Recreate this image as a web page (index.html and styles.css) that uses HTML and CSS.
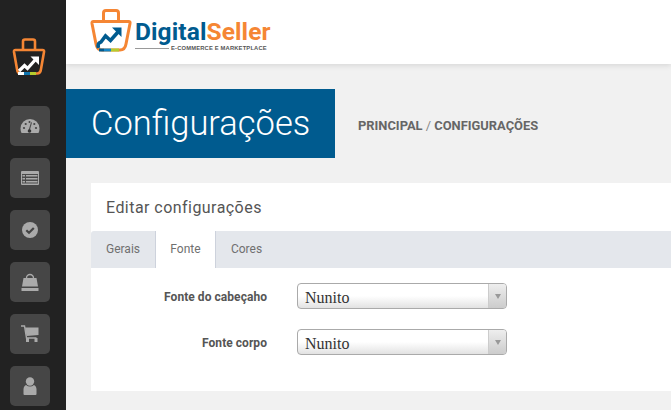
FILE: index.html
```html
<!DOCTYPE html>
<html lang="pt-BR">
<head>
<meta charset="utf-8">
<title>Configurações</title>
<link rel="stylesheet" href="styles.css">
</head>
<body>
<aside class="sidebar">
  <div class="side-logo">
    <svg width="34" height="38" viewBox="0 0 34 38" fill="none">
      <path d="M11 12V3.500Q11 1.500 13 1.500H21Q23 1.500 23 3.500V12" stroke="#f58634" stroke-width="2.600"/>
      <path d="M3.500 12H30.500Q32.500 12 32 14L29 31Q28.500 35.500 25 35.500H9Q5.500 35.500 5 31L2 14Q1.700 12 3.500 12Z" stroke="#f58634" stroke-width="2.600"/>
      <path d="M7 33L12.500 27.500L15.500 30.500L24 21" stroke="#fff" stroke-width="3.200"/>
      <path d="M18.500 18.500H27V27Z" fill="#fff"/>
      <path d="M6 35.500H12" stroke="#fff" stroke-width="3"/>
      <path d="M12 35.500H18" stroke="#0f74ad" stroke-width="3"/>
      <path d="M18 35.500H24" stroke="#b5cc2e" stroke-width="3"/>
    </svg>
  </div>
  <nav class="side-nav">
    <a class="side-btn"><svg width="20" height="16" viewBox="0 0 20 16"><path fill="#aaa" d="M10 1A9.500 9.500 0 0 0 .5 10.500Q.5 13 1.500 15H18.500Q19.500 13 19.500 10.500A9.500 9.500 0 0 0 10 1Z"/><path fill="#4a4a4a" d="M9.600 13L12 4.500L11 4.300L8.500 12.600Z"/><circle cx="9.500" cy="13" r="1.800" fill="#333"/><circle cx="4" cy="10" r="1.100" fill="#444"/><circle cx="5.700" cy="6" r="1.100" fill="#444"/><circle cx="9.500" cy="4" r="1" fill="#444"/><circle cx="14.300" cy="6" r="1.100" fill="#444"/><circle cx="16" cy="10" r="1.100" fill="#444"/></svg></a>
    <a class="side-btn"><svg width="18" height="14" viewBox="0 0 18 14"><rect width="18" height="14" rx="1" fill="#aaa"/><path fill="#4a4a4a" d="M1 3h16v9.500H1z"/><path fill="#aaa" d="M1.500 4h2.500v1.500H1.500zM5 4h11.500v1.500H5zM1.500 7h2.500v1.500H1.500zM5 7h11.500v1.500H5zM1.500 10h2.500v1.500H1.500zM5 10h11.500v1.500H5z"/></svg></a>
    <a class="side-btn"><svg width="16" height="16" viewBox="0 0 16 16"><circle cx="8" cy="8" r="8" fill="#aaa"/><path d="M4.300 8.200L7 10.800L11.800 5.900" fill="none" stroke="#444" stroke-width="2.200"/></svg></a>
    <a class="side-btn"><svg width="18" height="18" viewBox="0 0 18 18"><path fill="none" stroke="#aaa" stroke-width="1.300" d="M5.500 7V5A3.500 3.500 0 0 1 12.500 5V7"/><path fill="#aaa" d="M2.500 5H15.500L17 13.500H1ZM.5 15H17.500V18H.5Z"/></svg></a>
    <a class="side-btn"><svg width="18" height="18" viewBox="0 0 18 18"><path fill="none" stroke="#aaa" stroke-width="1.400" d="M0 1H3.500L5.500 13H15.500"/><path fill="#aaa" d="M4 2.500H17.500V10L5.500 11Z"/><rect x="5" y="13" width="3" height="4" fill="#aaa"/><rect x="13.500" y="13" width="3" height="4" fill="#aaa"/></svg></a>
    <a class="side-btn"><svg width="14" height="18" viewBox="0 0 14 18"><circle cx="7" cy="4.500" r="4.200" fill="#aaa"/><path fill="#aaa" d="M3 8Q7 11 11 8Q13.500 9 13.500 12.500V17Q13.500 18 12.500 18H1.500Q.5 18 .5 17V12.500Q.5 9 3 8Z"/></svg></a>
  </nav>
</aside>
<div class="main">
  <header class="topbar">
    <div class="brand">
      <svg class="brand-mark" width="42" height="43" viewBox="0 0 42 43" fill="none">
        <path d="M13.500 12V4Q13.500 1.500 16 1.500H26Q28.500 1.500 28.500 4V12" stroke="#f58634" stroke-width="3"/>
        <path d="M3.500 12.500H38.500Q40.500 12.500 40 14.500L36 35Q35 41 30 41H12Q7 41 6 35L2 14.500Q1.700 12.500 3.500 12.500Z" stroke="#f58634" stroke-width="3"/>
        <path d="M8.500 39Q7 34 11 33L15.500 27L20.500 31.500L28 23" stroke="#005b8f" stroke-width="3.600"/>
        <path d="M22 18.500H31.500V28Z" fill="#005b8f"/>
        <path d="M9 41H14" stroke="#005b8f" stroke-width="3"/>
        <path d="M14 41H21" stroke="#1386c7" stroke-width="3"/>
        <path d="M21 41H29" stroke="#b5cc2e" stroke-width="3"/>
      </svg>
      <div class="brand-text">
        <div class="brand-name"><span class="brand-blue">Digital</span><span class="brand-orange">Seller</span></div>
        <div class="brand-sub"><span class="brand-rule"></span><span>E-COMMERCE E MARKETPLACE</span></div>
      </div>
    </div>
  </header>
  <section class="page-head">
    <h1 class="page-title">Configurações</h1>
    <div class="crumbs"><b>PRINCIPAL</b> <span class="crumb-sep">/</span> <b>CONFIGURAÇÕES</b></div>
  </section>
  <section class="panel">
    <h2 class="panel-title">Editar configurações</h2>
    <div class="tabs">
      <a class="tab tab-first">Gerais</a>
      <a class="tab tab-active">Fonte</a>
      <a class="tab">Cores</a>
    </div>
    <form class="form">
      <div class="row">
        <label class="label">Fonte do cabeçaho</label>
        <div class="select"><span class="select-value">Nunito</span><span class="select-arrow"><i class="caret"></i></span></div>
      </div>
      <div class="row">
        <label class="label">Fonte corpo</label>
        <div class="select"><span class="select-value">Nunito</span><span class="select-arrow"><i class="caret"></i></span></div>
      </div>
    </form>
  </section>
</div>
</body>
</html>
```
FILE: styles.css
```css
* { box-sizing: border-box; }
html, body { margin: 0; height: 100%; overflow: hidden; }
body { display: flex; background: #f1f1f1; font-family: Roboto, "Liberation Sans", sans-serif; color: #555; }

.sidebar { width: 66px; flex: none; background: #222; display: flex; flex-direction: column; align-items: center; }
.side-logo { height: 106px; padding: 38px 8px 0 0; display: flex; justify-content: center; width: 100%; }
.side-nav { display: flex; flex-direction: column; gap: 12px; padding-right: 6px; }
.side-btn { width: 40px; height: 40px; background: #464646; border-radius: 5px; display: flex; align-items: center; justify-content: center; }

.main { flex: 1; min-width: 0; }
.topbar { height: 64px; background: #fff; box-shadow: 0 1px 6px rgba(0,0,0,.13); padding: 9px 0 0 24px; }
.brand { display: flex; align-items: flex-start; gap: 3px; }
.brand-mark { flex: none; }
.brand-text { padding-top: 13px; }
.brand-name { font: 700 24.500px/20px Roboto, sans-serif; letter-spacing: .1px; }
.brand-blue { color: #005b8f; }
.brand-orange { color: #f58634; }
.brand-sub { display: flex; align-items: center; gap: 2px; font: 700 5.800px/8px "Liberation Sans", sans-serif; color: #555; letter-spacing: .17px; margin-top: 2px; }
.brand-rule { width: 34px; height: 1px; background: #999; }

.page-head { display: flex; align-items: center; margin-top: 25px; height: 69px; }
.page-title { margin: 0; width: 269px; height: 69px; background: #005b8f; color: #fff; font: 300 34.500px/69px Roboto, sans-serif; padding-left: 25px; }
.crumbs { margin-left: 23px; padding-top: 4px; font-size: 12.900px; color: #666; }
.crumbs b { font-weight: 700; }
.crumb-sep { color: #888; }

.panel { margin: 25px 0 0 25px; height: 208px; background: #fff; }
.panel-title { margin: 0; height: 48px; padding: 1px 0 0 15px; font: 400 16px/48px Roboto, sans-serif; letter-spacing: .45px; color: #555; }
.tabs { display: flex; height: 37px; background: #e4e7ec; border-radius: 3px 0 0 0; }
.tab { height: 37px; font-size: 12px; line-height: 37px; color: #707070; text-align: center; }
.tab-first { width: 65px; border-right: 1px solid #cdd2dc; }
.tab-active { width: 60px; background: #fff; border-right: 1px solid #cdd2dc; }
.tab:last-child { width: 61px; }

.form { padding-top: 15px; display: flex; flex-direction: column; gap: 20px; }
.row { display: flex; align-items: center; height: 26px; }
.label { width: 176px; padding-top: 2px; text-align: right; font-size: 12px; font-weight: 700; color: #555; letter-spacing: .05px; }
.select { margin-left: 30px; width: 210px; height: 26px; border: 1px solid #aaa; border-radius: 4px; display: flex; background: linear-gradient(#fff 50%, #e2e2e2); }
.select-value { flex: 1; padding: 1px 0 0 7px; font: 16px/26px "Liberation Serif", serif; color: #333; }
.select-arrow { width: 18px; border-left: 1px solid #ccc; background: linear-gradient(#eee, #ccc); border-radius: 0 3px 3px 0; display: flex; align-items: center; justify-content: center; }
.caret { width: 0; height: 0; border: 3.500px solid transparent; border-top: 5px solid #999; border-bottom: 0; }
```
